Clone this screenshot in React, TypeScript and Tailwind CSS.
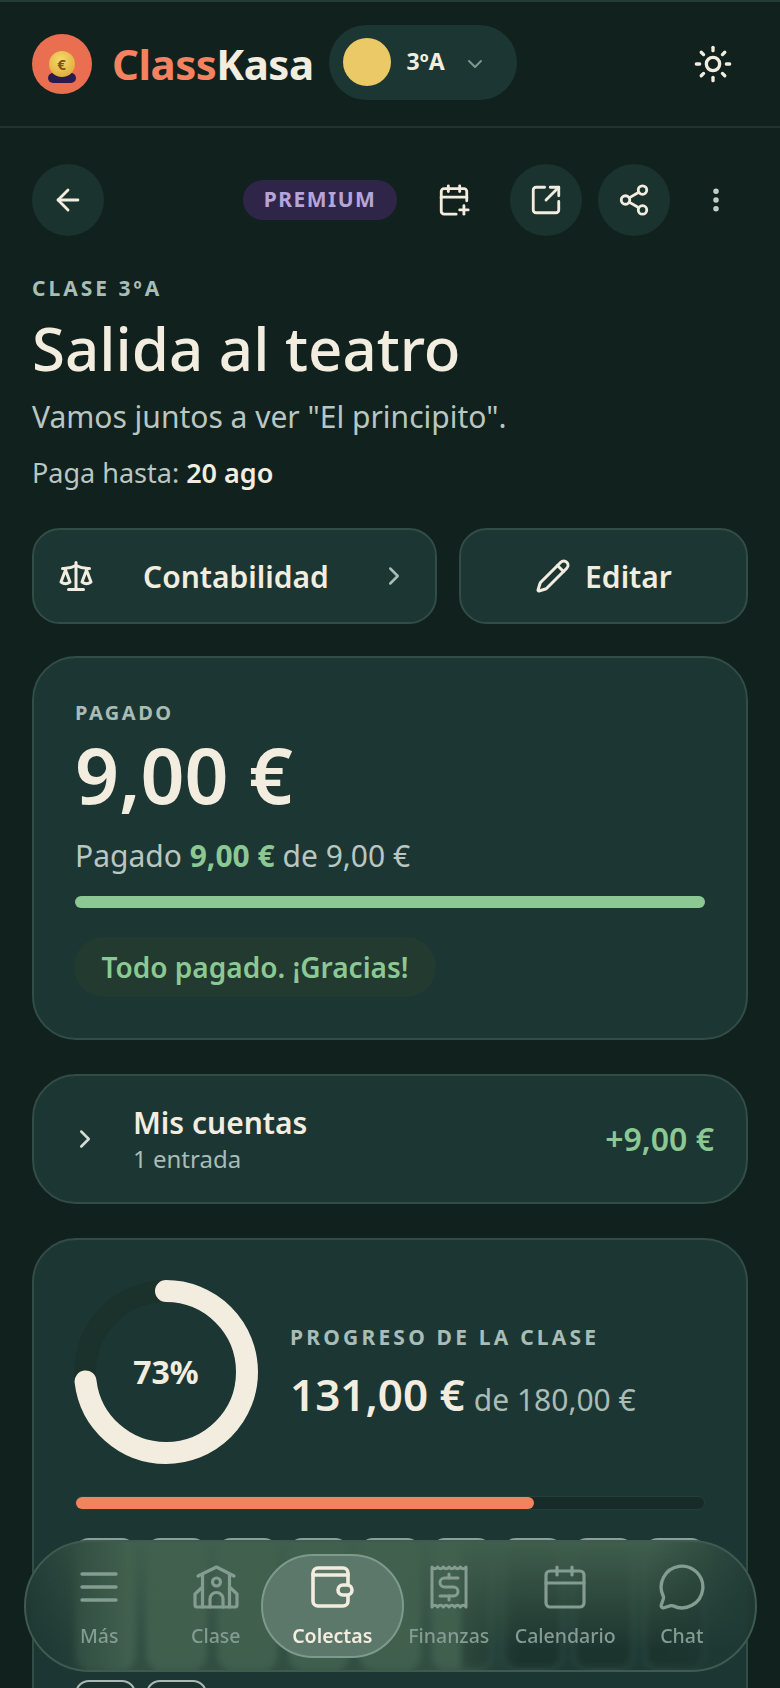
import {
  ArrowLeft,
  CalendarPlus,
  ChevronDown,
  ChevronRight,
  EllipsisVertical,
  MessageCircle,
  Pencil,
  Scale,
  Share2,
  SquareArrowOutUpRight,
  Sun,
} from 'lucide-react';

const cells = [100, 100, 100, 100, 100, 50, 0, 0, 0];

function MenuIcon() {
  return (
    <svg width="40" height="32" viewBox="0 0 40 32" fill="none" stroke="currentColor" strokeWidth="3.4" strokeLinecap="round">
      <path d="M3 3h34M3 16h34M3 29h34" />
    </svg>
  );
}

function ClaseIcon() {
  return (
    <svg width="46" height="44" viewBox="0 0 46 44" fill="none" stroke="currentColor" strokeWidth="3.2" strokeLinejoin="round" strokeLinecap="round">
      <path d="M5 11 23.500 2 41 11" />
      <path d="M9.500 9v33M36.500 9v33" />
      <path d="M9.500 22 2 29v11a2 2 0 0 0 2 2h38a2 2 0 0 0 2-2V29l-7.500-7" />
      <path d="M17 42V34a6.500 6.500 0 0 1 13 0v8" />
      <circle cx="23.500" cy="17" r="4" />
    </svg>
  );
}

function WalletIcon() {
  return (
    <svg width="44" height="44" viewBox="0 0 44 44" fill="none" stroke="currentColor" strokeWidth="3.6" strokeLinejoin="round" strokeLinecap="round">
      <rect x="3" y="3" width="35" height="38" rx="5" />
      <path d="M3 10h35" />
      <rect x="28" y="20" width="14" height="10" rx="5" fill="#5c786a" />
    </svg>
  );
}

function ReceiptIcon() {
  return (
    <svg width="38" height="46" viewBox="0 0 38 46" fill="none" stroke="currentColor" strokeWidth="3" strokeLinejoin="round" strokeLinecap="round">
      <path d="M2 3q2.830 3.500 5.670 0q2.830 3.500 5.670 0q2.830 3.500 5.670 0q2.830 3.500 5.670 0q2.830 3.500 5.670 0q2.830 3.500 5.670 0v40q-2.830-3.500-5.670 0q-2.830-3.500-5.670 0q-2.830-3.500-5.670 0q-2.830-3.500-5.670 0q-2.830-3.500-5.670 0q-2.830-3.500-5.670 0z" />
      <path d="M28 14H14.500a4.500 4.500 0 0 0 0 9h9a4.500 4.500 0 0 1 0 9H10" />
      <path d="M19 10v4M19 32v4" />
    </svg>
  );
}

function CalendarIcon() {
  return (
    <svg width="42" height="44" viewBox="0 0 42 44" fill="none" stroke="currentColor" strokeWidth="3.2" strokeLinejoin="round" strokeLinecap="round">
      <rect x="2" y="6" width="38" height="36" rx="4" />
      <path d="M2 18h38M13 2v8M28 2v8" />
    </svg>
  );
}

function NavItem({ label, active, children }: { label: string; active?: boolean; children: React.ReactNode }) {
  return (
    <div className={`relative flex flex-col items-center justify-center gap-[12px] ${active ? 'text-[#f3ede0]' : 'text-[#859c92]'}`}>
      {active && (
        <div className="absolute top-1/2 left-[-13px] right-[-13px] h-[104px] -translate-y-1/2 rounded-[52px] border-2 border-[#7d9a8e] bg-[#5c786a]" />
      )}
      <div className="relative flex h-[48px] items-center justify-center">{children}</div>
      <span className={`relative text-[19.500px] leading-[26px] whitespace-nowrap ${active ? 'font-semibold' : 'font-medium'}`}>{label}</span>
    </div>
  );
}

function RoundButton({ children }: { children: React.ReactNode }) {
  return (
    <div className="flex h-[72px] w-[72px] items-center justify-center rounded-full bg-[#1a332e] text-[#f3ede0]">
      {children}
    </div>
  );
}

export default function App() {
  return (
    <div className="relative h-[1688px] w-[780px] overflow-hidden bg-[#11211e] font-['Noto_Sans',sans-serif] text-[#f3ede0]">
      <header className="flex h-[128px] items-center border-t-2 border-b-2 border-t-[#233a35] border-b-[#20332f] pl-[32px] pr-[47px]">
        <div className="h-[60px] w-[60px] rounded-full bg-[#ea6f50]">
          <svg width="60" height="60" viewBox="0 0 60 60">
            <defs>
              <radialGradient id="coin" cx="0.45" cy="0.35" r="0.7">
                <stop offset="0" stopColor="#f6dc6e" />
                <stop offset="1" stopColor="#dfa93a" />
              </radialGradient>
            </defs>
            <rect x="16" y="39" width="28" height="10" rx="5" fill="#2a1a50" />
            <circle cx="30" cy="30" r="13" fill="url(#coin)" />
            <text x="29.500" y="36" textAnchor="middle" fontSize="15" fontWeight="700" fill="#7d5212">€</text>
          </svg>
        </div>
        <div className="ml-[20px] text-[42px] leading-none font-bold tracking-[-0.5px]">
          <span className="text-[#f4825f]">Class</span>
          <span>Kasa</span>
        </div>
        <div className="ml-[15px] -mt-[4px] flex h-[75px] w-[188px] items-center rounded-full bg-[#1c3733] pl-[14px]">
          <div className="h-[48px] w-[48px] rounded-full bg-[#ebc966]" />
          <span className="ml-[16px] -mt-[2px] text-[23px] font-bold">3ºA</span>
          <ChevronDown size={24} className="ml-[18px] mt-[4px] text-[#7f978e]" />
        </div>
        <Sun size={40} strokeWidth={2} className="ml-auto" />
      </header>

      <main className="px-[32px]">
        <div className="mt-[36px] flex items-center">
          <RoundButton>
            <ArrowLeft size={34} strokeWidth={2} />
          </RoundButton>
          <div className="ml-[139px] flex h-[40px] w-[154px] items-center justify-center rounded-full bg-[#2f2549] text-[21px] font-bold tracking-[1.5px] text-[#b6a5d8]">
            PREMIUM
          </div>
          <div className="flex w-[113px] justify-center">
            <CalendarPlus size={34} strokeWidth={2} />
          </div>
          <RoundButton>
            <SquareArrowOutUpRight size={34} strokeWidth={2} />
          </RoundButton>
          <div className="ml-[16px]">
            <RoundButton>
              <Share2 size={34} strokeWidth={2} />
            </RoundButton>
          </div>
          <EllipsisVertical size={30} strokeWidth={2.4} className="ml-[31px] text-[#c6cfc9]" />
        </div>

        <div className="mt-[38px] text-[21px] leading-[28px] font-bold tracking-[3px] text-[#a9bcb6]">CLASE 3ºA</div>
        <h1 className="mt-[8px] text-[60px] leading-[76px] font-medium">Salida al teatro</h1>
        <p className="mt-[11px] text-[30px] leading-[40px] text-[#b9c6c1]">Vamos juntos a ver "El principito".</p>
        <p className="mt-[16px] text-[27px] leading-[40px] text-[#b9c6c1]">
          Paga hasta: <span className="font-semibold text-[#f3ede0]">20 ago</span>
        </p>

        <div className="mt-[35px] flex gap-[22px]">
          <div className="flex h-[96px] w-[405px] items-center rounded-[28px] border-2 border-[#324c46] bg-[#1c3733] pl-[24px] pr-[26px]">
            <Scale size={36} strokeWidth={2} />
            <span className="ml-[49px] text-[30px] font-semibold">Contabilidad</span>
            <ChevronRight size={30} strokeWidth={2} className="ml-auto text-[#a9bcb6]" />
          </div>
          <div className="flex h-[96px] flex-1 items-center justify-center gap-[14px] rounded-[28px] border-2 border-[#324c46] bg-[#1c3733]">
            <Pencil size={36} strokeWidth={2} />
            <span className="text-[30px] font-semibold">Editar</span>
          </div>
        </div>

        <section className="mt-[32px] h-[384px] rounded-[44px] border-2 border-[#324c46] bg-[#1c3733] px-[41px] pt-[41px]">
          <div className="text-[20px] leading-[28px] font-bold tracking-[2.5px] text-[#a9bcb6]">PAGADO</div>
          <div className="mt-[6px] text-[77px] leading-[84px] font-semibold">9,00 €</div>
          <p className="mt-[19px] text-[30px] leading-[40px] text-[#b9c6c1]">
            Pagado <span className="font-bold text-[#8cc894]">9,00 €</span> de 9,00 €
          </p>
          <div className="mt-[20px] h-[12px] rounded-full bg-[#8cc894]" />
          <div className="mt-[29px] -ml-[1px] flex h-[60px] w-[362px] items-center justify-center rounded-full bg-[#223a2f] text-[28px] font-semibold text-[#8cc894]">
            Todo pagado. ¡Gracias!
          </div>
        </section>

        <section className="mt-[34px] flex h-[130px] items-center rounded-[44px] border-2 border-[#324c46] bg-[#1c3733] pl-[36px] pr-[32px]">
          <ChevronRight size={30} strokeWidth={2} className="text-[#d5dcd6]" />
          <div className="ml-[33px]">
            <div className="text-[30px] leading-[40px] font-semibold">Mis cuentas</div>
            <div className="text-[24px] leading-[32px] text-[#a9bcb6]">1 entrada</div>
          </div>
          <div className="ml-auto text-[32px] font-semibold text-[#8cc894]">+9,00 €</div>
        </section>

        <section className="mt-[34px] h-[600px] rounded-[44px] border-2 border-[#324c46] bg-[#1c3733] px-[41px] pt-[40px]">
          <div className="-ml-[1px] flex items-center">
            <div className="relative h-[184px] w-[184px]">
              <svg width="184" height="184" viewBox="0 0 184 184" className="-rotate-90">
                <circle cx="92" cy="92" r="81" fill="none" stroke="#1a312c" strokeWidth="22" />
                <circle cx="92" cy="92" r="81" fill="none" stroke="#f3ede0" strokeWidth="22" strokeLinecap="round" strokeDasharray="371.500 508.900" />
              </svg>
              <div className="absolute inset-0 flex items-center justify-center text-[32px] font-bold">73%</div>
            </div>
            <div className="ml-[32px]">
              <div className="mt-[2px] text-[21px] leading-[30px] font-bold tracking-[3.2px] text-[#a9bcb6]">PROGRESO DE LA CLASE</div>
              <div className="mt-[12px] flex items-baseline gap-[9px]">
                <span className="text-[44px] leading-[60px] font-semibold">131,00 €</span>
                <span className="text-[30px] text-[#a9bcb6]">de 180,00 €</span>
              </div>
            </div>
          </div>
          <div className="mt-[32px] h-[14px] rounded-full border border-[#243f39] bg-[#172c28]">
            <div className="h-full w-[73%] rounded-full bg-[#f4825f]" />
          </div>
          <div className="mt-[28px] grid grid-cols-9 gap-[10px]">
            {cells.map((paid, i) => (
              <div
                key={i}
                className={`h-[132px] overflow-hidden rounded-[14px] border-2 border-t-[#8a9f95] ${paid === 100 ? 'border-[#3f5f4e]' : 'border-[#334f47]'} bg-[#1a322d]`}
              >
                {paid > 0 && <div className={`h-full ${paid === 100 ? 'w-full' : 'w-1/2'} bg-[#3f5f4e]`} />}
              </div>
            ))}
            <div className="h-[132px] rounded-[14px] border-2 border-[#a9b8b1] bg-[#1a322d]" />
            <div className="h-[132px] rounded-[14px] border-2 border-[#a9b8b1] bg-[#1a322d]" />
          </div>
        </section>
      </main>

      <nav className="absolute top-[1540px] left-[24px] grid h-[132px] w-[733px] grid-cols-6 items-center rounded-[66px] border-2 border-[#3f5a50] bg-[linear-gradient(to_right,rgba(30,56,51,0.85),rgba(30,56,51,0)_14%,rgba(30,56,51,0)_86%,rgba(30,56,51,0.85)),linear-gradient(to_right,rgba(66,96,78,0),rgba(66,96,78,0.55)_12%,rgba(66,96,78,0.55)_58%,rgba(66,96,78,0)_68%),linear-gradient(to_bottom,rgba(66,96,78,0.95),rgba(66,96,78,0.05)_85%)] px-[15px] backdrop-blur-[3px]">
        <NavItem label="Más">
          <MenuIcon />
        </NavItem>
        <NavItem label="Clase">
          <ClaseIcon />
        </NavItem>
        <NavItem label="Colectas" active>
          <WalletIcon />
        </NavItem>
        <NavItem label="Finanzas">
          <ReceiptIcon />
        </NavItem>
        <NavItem label="Calendario">
          <CalendarIcon />
        </NavItem>
        <NavItem label="Chat">
          <MessageCircle size={50} strokeWidth={1.6} />
        </NavItem>
      </nav>
    </div>
  );
}
